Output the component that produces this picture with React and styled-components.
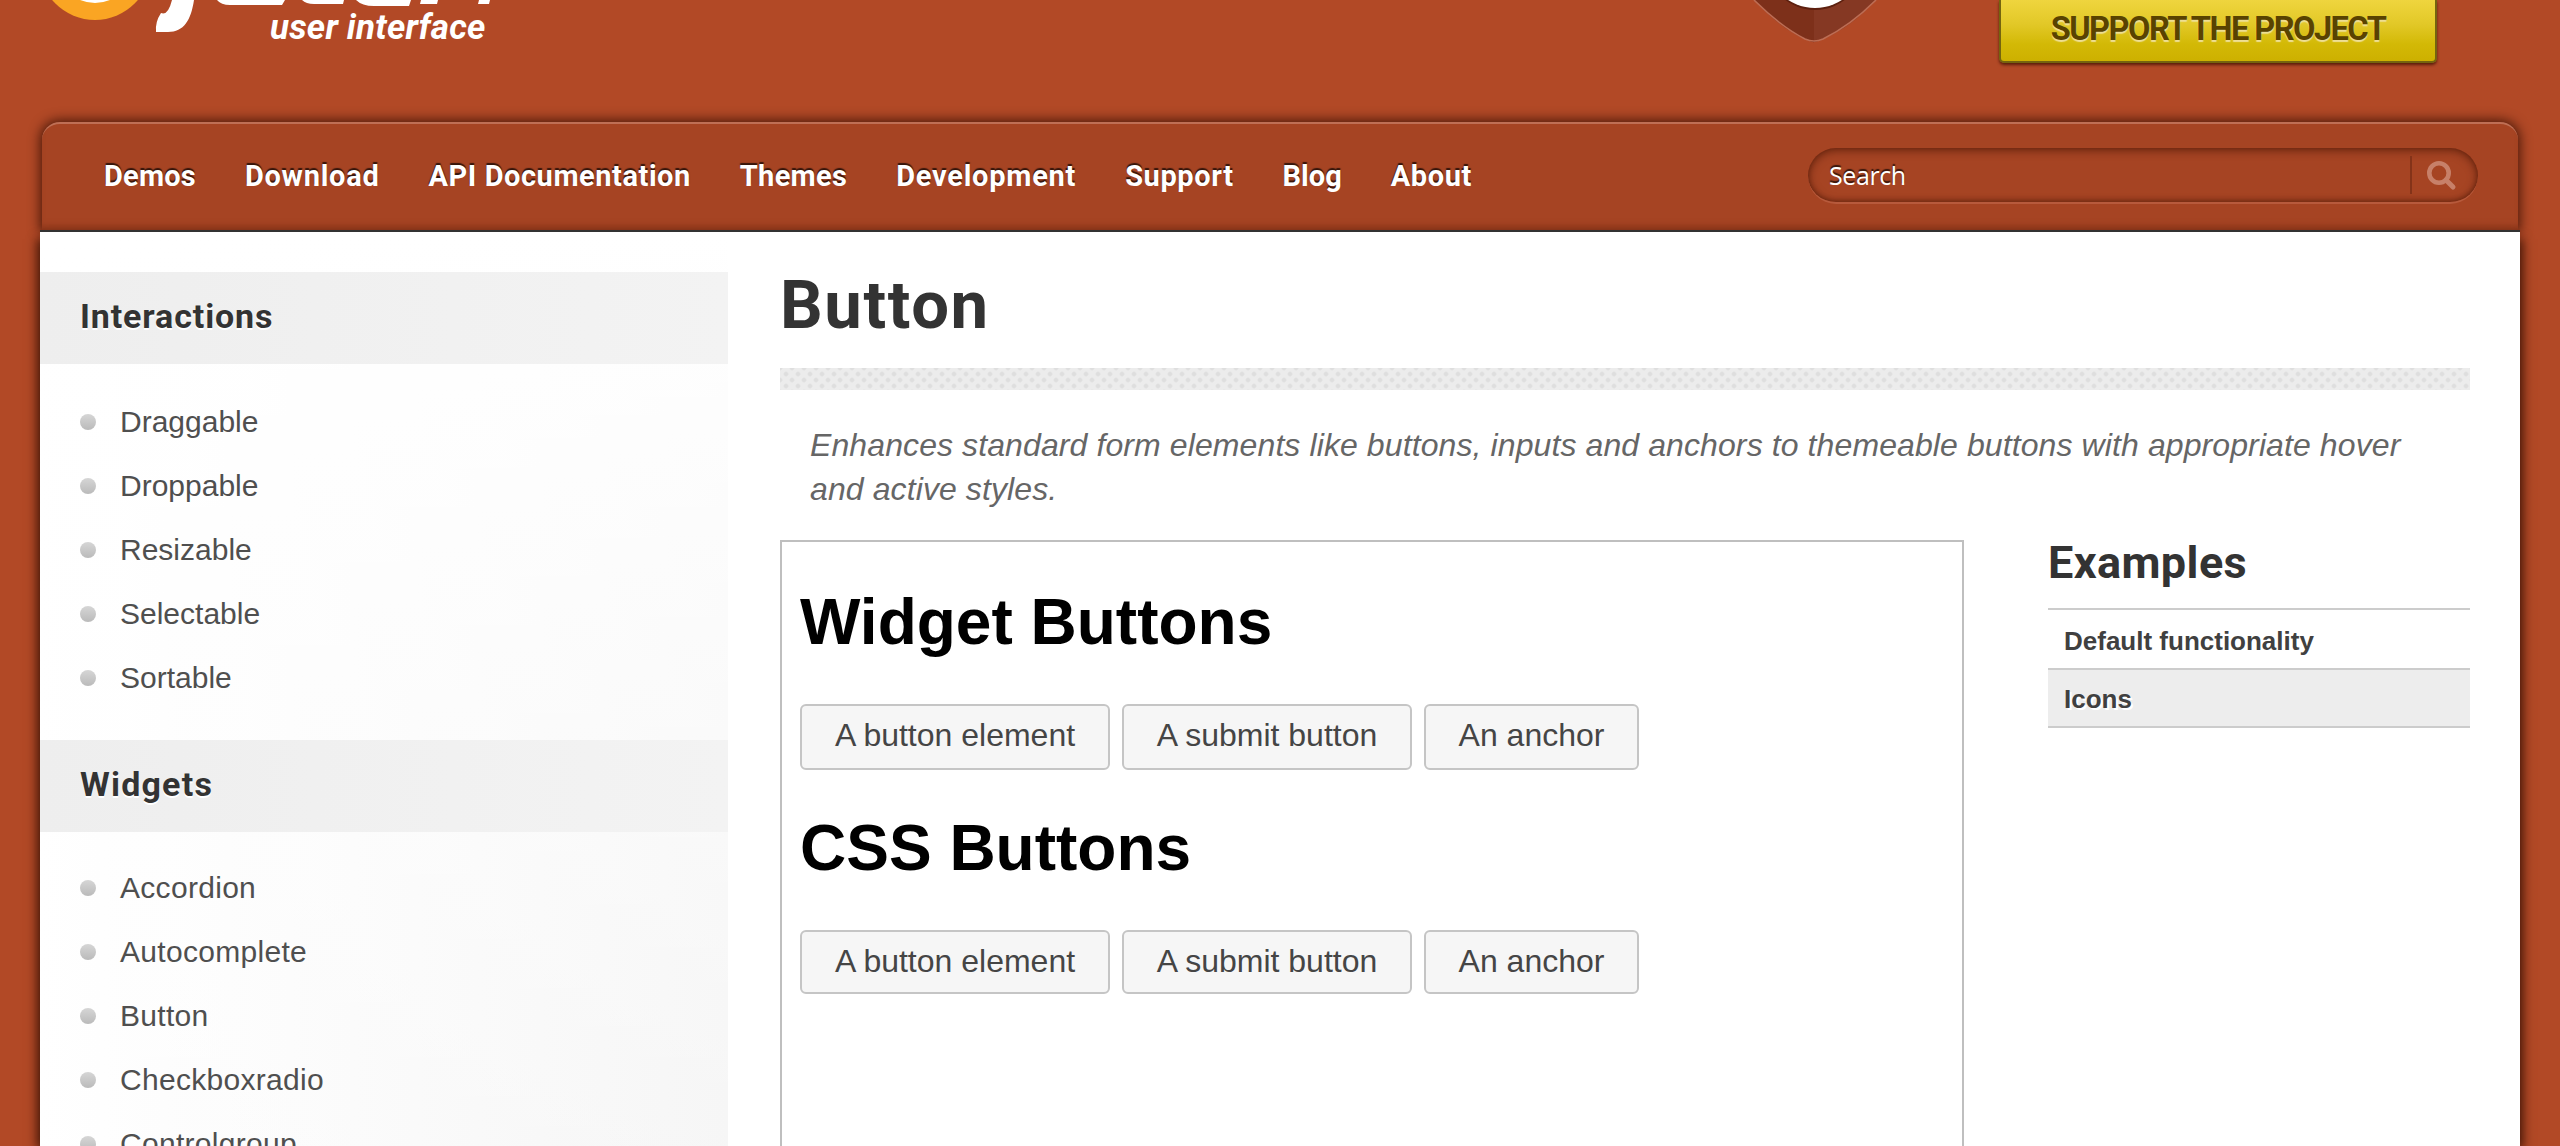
import React from "react";
import styled, { createGlobalStyle, css } from "styled-components";

const Global = createGlobalStyle`
  * { box-sizing: border-box; }
  html, body { margin: 0; padding: 0; }
  body { background: #b24926; overflow: hidden; font-family: "Liberation Sans", Arial, sans-serif; }
  h1, h2, h3, p, ul { margin: 0; padding: 0; }
  ul { list-style: none; }
`;
const display = css`
  font-family: Roboto, "Noto Sans", sans-serif;
  font-weight: 700;
  letter-spacing: ${p => p.$ls || 0}px;
`;

const Page = styled.div`
  height: 1146px;
  padding: 0 40px;
  overflow: hidden;
  display: flex;
  flex-direction: column;
`;
const Header = styled.header`
  height: 122px;
  flex: none;
  display: flex;
  align-items: flex-start;
`;
const Brand = styled.div`
  width: 460px;
  height: 60px;
  position: relative;
  overflow: hidden;
`;
const BrandMark = styled.svg`
  display: block;
`;
const Tagline = styled.span`
  ${display}
  position: absolute;
  left: 230px;
  top: 7px;
  font-size: 35px;
  line-height: 42px;
  font-style: italic;
  color: #fff;
  white-space: nowrap;
`;
const Shield = styled.svg`
  display: block;
  margin-left: 1250px;
`;
const SupportButton = styled.a`
  ${display}
  width: 438px;
  height: 63px;
  margin-left: 119px;
  padding-bottom: 3px;
  display: flex;
  align-items: center;
  justify-content: center;
  font-size: 32.5px;
  line-height: 40px;
  color: #594300;
  text-shadow: 0 2px 1px #eedf95;
  border: 2px solid #74640f;
  border-top: 0;
  border-radius: 0 0 5px 5px;
  background: linear-gradient(#efd53e 0, #e2c827 40%, #d3b906 72%, #cdb000 100%);
  box-shadow: 0 2px 3px rgba(60, 15, 0, .75);
`;
const Nav = styled.nav`
  height: 108px;
  flex: none;
  margin: 0 2px;
  padding: 0 40px 0 62px;
  display: flex;
  align-items: center;
  justify-content: space-between;
  background: #a64423;
  border-top: 2px solid #bf6f55;
  border-radius: 18px 18px 0 0;
  box-shadow: 0 0 12px 2px rgba(40, 10, 0, .75), inset 0 -8px 8px -6px rgba(60, 15, 0, .35);
`;
const NavLinks = styled.div`
  display: flex;
  gap: 49px;
  margin-top: -2px;
`;
const NavLink = styled.a`
  ${display}
  font-size: 29px;
  line-height: 40px;
  color: #fff;
  text-shadow: 0 -2px 1px #35150b;
  white-space: nowrap;
`;
const Search = styled.div`
  width: 670px;
  height: 56px;
  margin-top: -2px;
  border-radius: 28px;
  display: flex;
  align-items: center;
  padding: 0 21px;
  background: #a64423;
  border-bottom: 2px solid #b75a3c;
  box-shadow: inset 0 2px 10px rgba(60, 15, 0, .65), inset 0 -2px 4px rgba(60, 15, 0, .3);
`;
const SearchText = styled.span`
  flex: 1;
  font-family: "Open Sans", sans-serif;
  font-size: 25px;
  color: #fff;
  text-shadow: 0 -2px 1px #35150b;
  letter-spacing: -0.4px;
`;
const Divider = styled.span`
  width: 2px;
  height: 38px;
  background: #843319;
  margin-right: 15px;
`;

const Main = styled.main`
  flex: 1;
  min-height: 0;
  display: flex;
  background: #fff;
  border-top: 2px solid #333;
  box-shadow: -6px 6px 10px -3px rgba(40, 10, 0, .8), 6px 6px 10px -3px rgba(40, 10, 0, .8);
`;
const Sidebar = styled.aside`
  width: 688px;
  padding-top: 40px;
  flex: none;
  background:
    linear-gradient(#fff 0, rgba(255, 255, 255, 0) 1100px),
    linear-gradient(to right, #fff 0, #f4f4f4 100%);
`;
const SideHeading = styled.h3`
  ${display}
  height: 92px;
  padding: 0 40px;
  font-size: 34px;
  line-height: 88px;
  color: #333;
  text-shadow: 0 2px 0 #fff;
  background: linear-gradient(to right, #eee, #f3f3f3);
`;
const SideList = styled.ul`
  padding: ${p => p.$top}px 40px 30px;
  letter-spacing: ${p => p.$ls || 0}px;
`;
const SideItem = styled.li`
  height: 64px;
  line-height: 64px;
  font-size: 30px;
  color: #4f4f4f;
  display: flex;
  align-items: center;
  gap: 24px;
`;
const Bullet = styled.i`
  width: 16px;
  height: 16px;
  border-radius: 50%;
  background: linear-gradient(#d6d6d6, #bababa);
`;

const Content = styled.section`
  width: 1742px;
  padding-left: 52px;
  display: flex;
  flex-direction: column;
`;
const Title = styled.h1`
  ${display}
  font-size: 67px;
  line-height: 80px;
  margin-top: 33px;
  color: #333;
`;
const Rule = styled.div`
  height: 22px;
  flex: none;
  margin-top: 23px;
  background-color: #ececec;
  background-image:
    radial-gradient(circle at center, #dedede 1.5px, transparent 3px),
    radial-gradient(circle at center, #dedede 1.5px, transparent 3px);
  background-size: 12px 12px;
  background-position: 0 0, 6px 6px;
`;
const Lead = styled.p`
  font-size: 32px;
  line-height: 44px;
  font-style: italic;
  color: #666;
  padding: 0 30px;
  margin-top: 33px;
  letter-spacing: 0.1px;
`;
const Columns = styled.div`
  flex: 1;
  display: flex;
  justify-content: space-between;
  margin-top: 29px;
`;
const Demo = styled.div`
  width: 1184px;
  height: 700px;
  padding: 0 18px;
  border: 2px solid #bfbfbf;
  border-bottom: 0;
`;
const DemoTitle = styled.h1`
  font-size: 64px;
  line-height: 74px;
  color: #000;
  margin-top: ${p => p.$mt}px;
`;
const ButtonRow = styled.div`
  display: flex;
  gap: 12px;
  margin-top: 45px;
`;
const UiButton = styled.button`
  font: 32px/36px "Liberation Sans", Arial, sans-serif;
  color: #454545;
  background: #f6f6f6;
  border: 2px solid #c5c5c5;
  border-radius: 6px;
  width: ${p => p.$w}px;
  height: ${p => p.$h}px;
  padding: 11px 0 0;
  display: flex;
  justify-content: center;
  align-items: flex-start;
  white-space: nowrap;
`;
const Examples = styled.aside`
  width: 422px;
`;
const ExTitle = styled.h2`
  ${display}
  height: 70px;
  font-size: 45px;
  line-height: 45px;
  color: #333;
  border-bottom: 2px solid #ccc;
`;
const ExItem = styled.div`
  height: ${p => p.$h}px;
  padding: ${p => p.$pt}px 16px 0;
  border-bottom: 2px solid #ccc;
  font-size: 26px;
  line-height: 36px;
  font-weight: 700;
  color: #404040;
  background: ${p => (p.$shade ? "#ededed" : "#fff")};
  text-shadow: 2px 2px 0 #fff;
`;

const links = [
  ["Demos", 0.2], ["Download", 0.75], ["API Documentation", 0.55], ["Themes", 0.3],
  ["Development", 0.75], ["Support", 0.6], ["Blog", 0], ["About", 0.6],
];
const interactions = ["Draggable", "Droppable", "Resizable", "Selectable", "Sortable"];
const widgets = ["Accordion", "Autocomplete", "Button", "Checkboxradio", "Controlgroup"];
const buttons = [["A button element", 310], ["A submit button", 290], ["An anchor", 215]];

const Buttons = ({ height }) => (
  <ButtonRow>
    {buttons.map(([t, w]) => <UiButton key={t} $w={w} $h={height}>{t}</UiButton>)}
  </ButtonRow>
);

export default function App() {
  return (
    <>
      <Global />
      <Page>
        <Header>
          <Brand>
            <BrandMark width="460" height="60" viewBox="40 0 460 60">
              <circle cx="95" cy="-36" r="56" fill="#faa523" />
              <circle cx="95" cy="-36" r="39" fill="#fff" />
              <g fill="#fff">
                <path d="M172 0H194C191 20 184 32 168 32H156Q155 22 161 13Q168 16 172 0Z" />
                <path d="M217 0Q221 5 230 5H282L285 0Z" />
                <path d="M302 0Q306 4 314 4H343L344 0Z" />
                <path d="M356 0Q362 6 374 6H409L411 0Z" />
                <path d="M421 0L420 4H437L438 0Z" />
                <path d="M479 0L478 4H489L490 0Z" />
              </g>
            </BrandMark>
            <Tagline $ls={0.2}>user interface</Tagline>
          </Brand>
          <Shield width="130" height="60" viewBox="1750 0 130 60">
            <path d="M1754 0Q1780 28 1805 39Q1814 43 1814 42V0Z" fill="#7d301a" />
            <path d="M1876 0Q1850 28 1823 39Q1817 42 1814 42V0Z" fill="#853823" />
            <path d="M1754 0Q1780 26 1805 39Q1814 43 1823 39Q1850 26 1876 0" fill="none" stroke="#bd6d54" strokeWidth="1.6" />
            <circle cx="1815" cy="-39" r="49" fill="#5d200f" />
            <circle cx="1815" cy="-41" r="49" fill="#fff" />
          </Shield>
          <SupportButton $ls={-1.5}>SUPPORT THE PROJECT</SupportButton>
        </Header>
        <Nav>
          <NavLinks>{links.map(([t, ls]) => <NavLink key={t} $ls={ls}>{t}</NavLink>)}</NavLinks>
          <Search>
            <SearchText>Search</SearchText>
            <Divider />
            <svg width="30" height="32" viewBox="0 0 30 32" fill="none" stroke="#c78069">
              <circle cx="12" cy="14" r="9.7" strokeWidth="4.6" />
              <path d="M19 21L26 28" strokeWidth="5" strokeLinecap="round" />
            </svg>
          </Search>
        </Nav>
        <Main>
          <Sidebar>
            <SideHeading $ls={0.87}>Interactions</SideHeading>
            <SideList $top={26}>
              {interactions.map(t => <SideItem key={t}><Bullet />{t}</SideItem>)}
            </SideList>
            <SideHeading $ls={1.2}>Widgets</SideHeading>
            <SideList $top={24} $ls={0.3}>
              {widgets.map(t => <SideItem key={t}><Bullet />{t}</SideItem>)}
            </SideList>
          </Sidebar>
          <Content>
            <Title $ls={1.6}>Button</Title>
            <Rule />
            <Lead>Enhances standard form elements like buttons, inputs and anchors to themeable buttons with appropriate hover and active styles.</Lead>
            <Columns>
              <Demo>
                <DemoTitle $mt={43}>Widget Buttons</DemoTitle>
                <Buttons height={66} />
                <DemoTitle $mt={41}>CSS Buttons</DemoTitle>
                <Buttons height={64} />
              </Demo>
              <Examples>
                <ExTitle $ls={0.4}>Examples</ExTitle>
                <ExItem $h={60} $pt={13}>Default functionality</ExItem>
                <ExItem $h={58} $pt={11} $shade>Icons</ExItem>
              </Examples>
            </Columns>
          </Content>
        </Main>
      </Page>
    </>
  );
}
